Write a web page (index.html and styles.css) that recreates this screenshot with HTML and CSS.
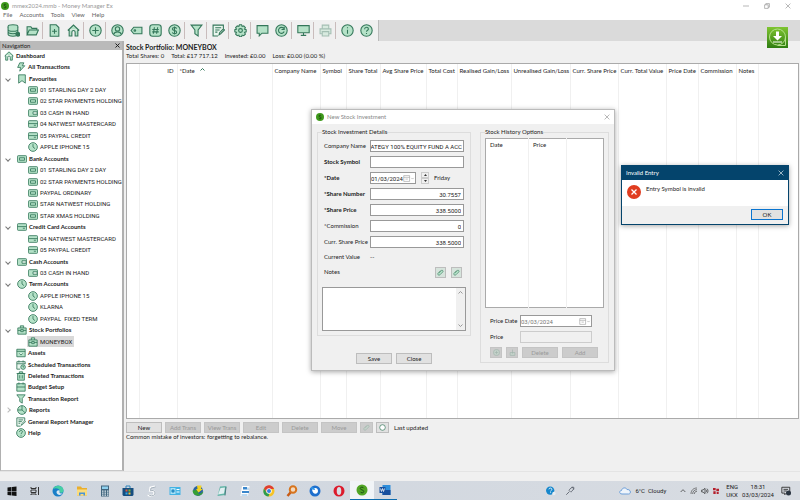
FILE: index.html
```
<!DOCTYPE html>
<html lang="en">
<head>
    <meta charset="utf-8">
    <title>mmex2024.mmb - Money Manager Ex</title>
    <link rel="stylesheet" href="styles.css">
</head>
<body>
<!-- icon set -->
<svg class="icon-set" width="0" height="0">
    <symbol id="i-db" viewBox="0 0 24 24"><ellipse cx="11" cy="5" rx="9" ry="3.5"/><path d="M2 5v14c0 2 4 3.500 9 3.500s9-1.500 9-3.500V5M2 10c0 2 4 3.500 9 3.500s9-1.500 9-3.500M2 14.500c0 2 4 3.500 9 3.500s9-1.500 9-3.500"/><circle class="solid" cx="20" cy="19" r="3.500"/></symbol>
    <symbol id="i-folder" viewBox="0 0 24 24"><path d="M2 20V5h7l2 3h9v3M2 20l4-9h17l-4 9z"/></symbol>
    <symbol id="i-newdoc" viewBox="0 0 24 24"><path d="M4 1.500h11l5 5v16H4zM12 9v9M7.500 13.500h9"/></symbol>
    <symbol id="i-home" viewBox="0 0 24 24"><path d="M1.500 12L12 2l10.500 10M4 10v12h5v-7c0-4 6-4 6 0v7h5V10"/></symbol>
    <symbol id="i-plus" viewBox="0 0 24 24"><circle cx="12" cy="12" r="10.500"/><path d="M12 6v12M6 12h12"/></symbol>
    <symbol id="i-user" viewBox="0 0 24 24"><circle cx="12" cy="12" r="10.500"/><circle cx="12" cy="9" r="4"/><path d="M5 19c2-6 12-6 14 0"/></symbol>
    <symbol id="i-tag" viewBox="0 0 24 24"><path d="M7 6h15v12H7l-5-6z"/><circle cx="9" cy="12" r="1.500"/></symbol>
    <symbol id="i-hash" viewBox="0 0 24 24"><rect x="1.500" y="1.500" width="21" height="21" rx="5"/><path d="M10 6L8 18M16 6l-2 12M6 10h12M6 14.500h12"/></symbol>
    <symbol id="i-dollar" viewBox="0 0 24 24"><circle cx="12" cy="12" r="10.500"/><path d="M16 8.500c-1-3-8-3-8 .5s8 2 8 6-7 4-8 .500M12 4.500v15" fill="none"/></symbol>
    <symbol id="i-funnel" viewBox="0 0 24 24"><path d="M2 2h20l-7 9v11l-6-4v-7z"/></symbol>
    <symbol id="i-report" viewBox="0 0 24 24"><path d="M21 9V2H2v20h9M6 7h11M6 11h8M6 15h4M13 20l1-4 7-7 2 2-7 7z" class="pale"/></symbol>
    <symbol id="i-gear" viewBox="0 0 24 24"><path d="M10 1.500h4l1 3 3-1 3 3-1.500 3 3 1v4l-3 1 1.500 3-3 3-3-1-1 3h-4l-1-3-3 1-3-3 1.500-3-3-1v-4l3-1L3 6.500l3-3 3 1z"/><circle cx="12" cy="12" r="3.500"/></symbol>
    <symbol id="i-chat" viewBox="0 0 24 24"><path d="M2 3h20v14H11l-5 5v-5H2z"/></symbol>
    <symbol id="i-refresh" viewBox="0 0 24 24"><circle cx="12" cy="12" r="10.500"/><path d="M16 8a5.500 5.500 0 1 0 1 6M17 5v5h-5" fill="none"/></symbol>
    <symbol id="i-screen" viewBox="0 0 24 24"><path d="M1.500 3h21v13h-21zM12 16v5M7 21h10"/></symbol>
    <symbol id="i-printer" viewBox="0 0 24 24"><path d="M6 9V2h12v7M6 18H2V9h20v9h-4M6 14h12v8H6z"/></symbol>
    <symbol id="i-info" viewBox="0 0 24 24"><circle cx="12" cy="12" r="10.500"/><path d="M12 10.500V18M12 6v2"/></symbol>
    <symbol id="i-help" viewBox="0 0 24 24"><circle cx="12" cy="12" r="10.500"/><path d="M8.500 9.500c0-5 7-4.500 7-.5 0 2.500-3.500 2.500-3.500 5.500M12 16.500v2" fill="none"/></symbol>
    <symbol id="i-bolt" viewBox="0 0 24 24"><path d="M9 2h10l-4 7h6L9 22l2-9H4z"/></symbol>
    <symbol id="i-mark" viewBox="0 0 24 24"><path d="M4 2h16v20l-8-6-8 6z"/></symbol>
    <symbol id="i-note" viewBox="0 0 24 24"><rect x="1" y="4" width="22" height="16" rx="2"/><path d="M6 9h12v6H6z"/></symbol>
    <symbol id="i-wallet" viewBox="0 0 24 24"><rect x="1" y="4" width="22" height="16" rx="2"/><path class="pale" d="M12 9h10v6H12z"/></symbol>
    <symbol id="i-card" viewBox="0 0 24 24"><rect x="1" y="4" width="22" height="16" rx="2"/><path d="M1 11h22M14 15h5"/></symbol>
    <symbol id="i-clock" viewBox="0 0 24 24"><circle cx="12" cy="12" r="10.500"/><path d="M12 5v7l5 4" fill="none"/></symbol>
    <symbol id="i-case" viewBox="0 0 24 24"><path d="M8 7V2h8v5M2 7h20v15H2zM2 13h7M15 13h7M9 11h6v5H9z"/></symbol>
    <symbol id="i-box" viewBox="0 0 24 24"><path d="M2 3h20v18H2zM2 8h20M8 13l4 4 4-4"/></symbol>
    <symbol id="i-sched" viewBox="0 0 24 24"><path class="pale" d="M10 22H2V4h20v6M2 9h20M7 1v5M17 1v5"/><circle cx="17" cy="17" r="5.500"/><path d="M17 14v3h2"/></symbol>
    <symbol id="i-bin" viewBox="0 0 24 24"><path d="M4 6h16v16H4zM1.500 6h21M8 6V2h8v4M9 10v8M15 10v8"/></symbol>
    <symbol id="i-cal" viewBox="0 0 24 24"><path d="M2 4h20v18H2zM2 12h20M7 1v5M17 1v5"/></symbol>
    <symbol id="i-pie" viewBox="0 0 24 24"><circle cx="12" cy="12" r="10.500"/><path d="M12 1.500V12l8 7M12 12H1.500"/></symbol>
    <symbol id="i-clip" viewBox="0 0 24 24"><path d="M7 13l8-8c3-3 8 2 5 5L10 20c-4 4-10-2-6-6L13 5"/></symbol>
    <symbol id="i-drop" viewBox="0 0 24 24"><path d="M4 22V12h16v10zM12 2v14"/></symbol>
</svg>

<header class="titlebar">
    <svg class="app-logo" viewBox="0 0 20 20"><circle cx="10" cy="10" r="10" fill="#3f9a1c"/><path d="M13 7c-1-2-6-2-6 .5s6 2 6 5-5 2.500-6 .5" fill="none" stroke="#173f0c" stroke-width="2"/></svg>
    <span>mmex2024.mmb - Money Manager Ex</span>
    <div class="window-controls">
        <button aria-label="Minimise"><svg viewBox="0 0 10 10"><path d="M0 5h10"/></svg></button>
        <button aria-label="Restore"><svg viewBox="0 0 10 10"><path d="M1 3h6v6H1zM3 3V1h6v6H7"/></svg></button>
        <button aria-label="Close"><svg viewBox="0 0 10 10"><path d="M1 1l8 8M9 1L1 9"/></svg></button>
    </div>
</header>

<nav class="menubar">
    <a href="#">File</a><a href="#">Accounts</a><a href="#">Tools</a><a href="#">View</a><a href="#">Help</a>
</nav>

<div class="toolbar">
    <div class="tools">
        <button aria-label="Database"><svg><use href="#i-db"/></svg></button>
        <button aria-label="Open"><svg><use href="#i-folder"/></svg></button>
        <i></i>
        <button aria-label="New account"><svg><use href="#i-newdoc"/></svg></button>
        <button aria-label="Home"><svg><use href="#i-home"/></svg></button>
        <i></i>
        <button aria-label="New transaction"><svg><use href="#i-plus"/></svg></button>
        <i></i>
        <button aria-label="Payees"><svg><use href="#i-user"/></svg></button>
        <button aria-label="Categories"><svg><use href="#i-tag"/></svg></button>
        <button aria-label="Tags"><svg><use href="#i-hash"/></svg></button>
        <button aria-label="Currency"><svg><use href="#i-dollar"/></svg></button>
        <i></i>
        <button aria-label="Filter"><svg><use href="#i-funnel"/></svg></button>
        <i></i>
        <button aria-label="Report manager"><svg><use href="#i-report"/></svg></button>
        <i></i>
        <button aria-label="Settings"><svg><use href="#i-gear"/></svg></button>
        <i></i>
        <button aria-label="News"><svg><use href="#i-chat"/></svg></button>
        <button aria-label="Refresh"><svg><use href="#i-refresh"/></svg></button>
        <i></i>
        <button aria-label="Full screen"><svg><use href="#i-screen"/></svg></button>
        <i></i>
        <button aria-label="Print" disabled><svg><use href="#i-printer"/></svg></button>
        <i></i>
        <button aria-label="About"><svg><use href="#i-info"/></svg></button>
        <button aria-label="Help"><svg><use href="#i-help"/></svg></button>
    </div>
</div>

<main class="workspace">
    <aside class="navigation">
        <div class="nav-title"><span>Navigation</span><button aria-label="Close navigation"><svg viewBox="0 0 10 10"><path d="M1 1l8 8M9 1L1 9"/></svg></button></div>
        <ul class="tree">
            <li class="root"><a href="#"><svg><use href="#i-home"/></svg>Dashboard</a></li>
            <li class="group"><a href="#"><svg><use href="#i-bolt"/></svg>All Transactions</a></li>
            <li class="group open"><a href="#"><svg><use href="#i-mark"/></svg>Favourites</a></li>
            <li><a href="#"><svg><use href="#i-note"/></svg>01 STARLING DAY 2 DAY</a></li>
            <li><a href="#"><svg><use href="#i-note"/></svg>02 STAR PAYMENTS HOLDING</a></li>
            <li><a href="#"><svg><use href="#i-wallet"/></svg>03 CASH IN HAND</a></li>
            <li><a href="#"><svg><use href="#i-card"/></svg>04 NATWEST MASTERCARD</a></li>
            <li><a href="#"><svg><use href="#i-card"/></svg>05 PAYPAL CREDIT</a></li>
            <li><a href="#"><svg><use href="#i-clock"/></svg>APPLE IPHONE 15</a></li>
            <li class="group open"><a href="#"><svg><use href="#i-note"/></svg>Bank Accounts</a></li>
            <li><a href="#"><svg><use href="#i-note"/></svg>01 STARLING DAY 2 DAY</a></li>
            <li><a href="#"><svg><use href="#i-note"/></svg>02 STAR PAYMENTS HOLDING</a></li>
            <li><a href="#"><svg><use href="#i-note"/></svg>PAYPAL ORDINARY</a></li>
            <li><a href="#"><svg><use href="#i-note"/></svg>STAR NATWEST HOLDING</a></li>
            <li><a href="#"><svg><use href="#i-note"/></svg>STAR XMAS HOLDING</a></li>
            <li class="group open"><a href="#"><svg><use href="#i-card"/></svg>Credit Card Accounts</a></li>
            <li><a href="#"><svg><use href="#i-card"/></svg>04 NATWEST MASTERCARD</a></li>
            <li><a href="#"><svg><use href="#i-card"/></svg>05 PAYPAL CREDIT</a></li>
            <li class="group open"><a href="#"><svg><use href="#i-wallet"/></svg>Cash Accounts</a></li>
            <li><a href="#"><svg><use href="#i-wallet"/></svg>03 CASH IN HAND</a></li>
            <li class="group open"><a href="#"><svg><use href="#i-clock"/></svg>Term Accounts</a></li>
            <li><a href="#"><svg><use href="#i-clock"/></svg>APPLE IPHONE 15</a></li>
            <li><a href="#"><svg><use href="#i-clock"/></svg>KLARNA</a></li>
            <li><a href="#"><svg><use href="#i-clock"/></svg>PAYPAL &nbsp;FIXED TERM</a></li>
            <li class="group open"><a href="#"><svg><use href="#i-case"/></svg>Stock Portfolios</a></li>
            <li><a href="#" class="selected"><svg><use href="#i-case"/></svg>MONEYBOX</a></li>
            <li class="group"><a href="#"><svg><use href="#i-box"/></svg>Assets</a></li>
            <li class="group"><a href="#"><svg><use href="#i-sched"/></svg>Scheduled Transactions</a></li>
            <li class="group"><a href="#"><svg><use href="#i-bin"/></svg>Deleted Transactions</a></li>
            <li class="group"><a href="#"><svg><use href="#i-cal"/></svg>Budget Setup</a></li>
            <li class="group"><a href="#"><svg><use href="#i-funnel"/></svg>Transaction Report</a></li>
            <li class="group closed"><a href="#"><svg><use href="#i-pie"/></svg>Reports</a></li>
            <li class="group"><a href="#"><svg><use href="#i-report"/></svg>General Report Manager</a></li>
            <li class="group"><a href="#"><svg><use href="#i-help"/></svg>Help</a></li>
        </ul>
    </aside>

    <section class="portfolio">
        <h1>Stock Portfolio: MONEYBOX</h1>
        <p class="totals"><span>Total Shares: 0</span><span>Total: £17 717.12</span><span>Invested: £0.00</span><span>Loss: £0.00 (0.00 %)</span></p>
        <div class="stock-list">
            <table>
                <colgroup>
                    <col class="w-icon"><col class="w-id"><col class="w-date"><col class="w-value"><col class="w-symbol"><col class="w-total"><col class="w-avg"><col class="w-cost"><col class="w-gain"><col class="w-loss"><col class="w-value"><col class="w-value"><col class="w-pdate"><col class="w-comm"><col class="w-notes"><col>
                </colgroup>
                <thead>
                <tr>
                    <th></th><th class="num">ID</th><th>*Date <svg class="sort" viewBox="0 0 10 6"><path d="M1 5l4-4 4 4"/></svg></th><th>Company Name</th><th>Symbol</th><th class="num">Share Total</th><th class="num">Avg Share Price</th><th class="num">Total Cost</th><th class="num">Realised Gain/Loss</th><th class="num">Unrealised Gain/Loss</th><th class="num">Curr. Share Price</th><th class="num">Curr. Total Value</th><th>Price Date</th><th class="num">Commission</th><th>Notes</th><th></th>
                </tr>
                </thead>
                <tbody>
                <tr><td></td><td></td><td></td><td></td><td></td><td></td><td></td><td></td><td></td><td></td><td></td><td></td><td></td><td></td><td></td><td></td></tr>
                </tbody>
            </table>
        </div>
        <div class="actions">
            <button>New</button>
            <button disabled>Add Trans</button>
            <button disabled>View Trans</button>
            <button disabled>Edit</button>
            <button disabled>Delete</button>
            <button disabled>Move</button>
            <button class="square" aria-label="Attachments" disabled><svg><use href="#i-clip"/></svg></button>
            <button class="square refresh" aria-label="Update prices"><svg viewBox="0 0 10 10"><circle cx="5" cy="5" r="4"/></svg></button>
            <span>Last updated</span>
        </div>
        <p class="tip">Common mistake of investors: forgetting to rebalance.</p>
    </section>
</main>
<div class="statusbar"></div>

<footer class="taskbar">
    <div class="apps">
        <a href="#" aria-label="Start"><svg viewBox="0 0 24 24"><path fill="#111" d="M3 5l8-1v8H3zM12 4l9-1v9h-9zM3 13h8v8l-8-1zM12 13h9v9l-9-1z"/></svg></a>
        <a href="#" aria-label="Task view"><svg viewBox="0 0 24 24"><path fill="none" stroke="#333" stroke-width="2" d="M4 4v3h10V4M4 10h10v5H4zM4 20v-2h10v2M19 4v16"/></svg></a>
        <a href="#" aria-label="Edge"><svg viewBox="0 0 24 24"><circle cx="12" cy="12" r="11" fill="#1a7fc8"/><path fill="#45cfa4" d="M2 8C6-2 24 0 23 12c-1 5-7 4-8 2 2-7-7-9-13-6z"/><path fill="#d9e8f2" d="M9 15c0-5 5-6 7-3-3 2 0 6 5 5-4 5-11 3-12-2z"/></svg></a>
        <a href="#" aria-label="File Explorer"><svg viewBox="0 0 24 24"><path fill="#e9ae2e" d="M2 3h8l2 3h10v15H2z"/><path fill="#fbdc7c" d="M2 9h20v12H2z"/><path fill="#4a94d6" d="M6 15h12v6h-3v-3H9v3H6z"/></svg></a>
        <a href="#" aria-label="Calculator"><svg viewBox="0 0 24 24"><path fill="#42667e" d="M4 1h16v22H4z"/><path fill="#8fd0ee" d="M6 3h12v5H6z"/><path stroke="#dce8ee" stroke-width="2.500" stroke-dasharray="3 2" d="M6 12h13M6 16h13M6 20h13"/></svg></a>
        <a href="#" aria-label="Store"><svg viewBox="0 0 24 24"><path fill="#164e80" d="M1 6h22v14l-2 2H3l-2-2z"/><path fill="none" stroke="#2b83bb" stroke-width="2" d="M8 6V2h8v4"/><path fill="#e35a38" d="M7 9h4v4H7z"/><path fill="#7cb82f" d="M13 9h4v4h-4z"/><path fill="#30a6e2" d="M7 15h4v4H7z"/><path fill="#f4c033" d="M13 15h4v4h-4z"/></svg></a>
        <a href="#" aria-label="Scanner"><svg viewBox="0 0 24 24"><path fill="none" stroke="#fff" stroke-width="4" d="M18 3L9 5l-1 6c8-1 10 3 8 8-3 4-9 3-12 0"/><path fill="none" stroke="#8796a4" stroke-width="1.500" d="M19 4L10 6l-1 5c8-1 10 3 8 8-3 4-9 3-12 0"/></svg></a>
        <a href="#" aria-label="Control Panel"><svg viewBox="0 0 24 24"><path fill="#43b3e4" d="M1 4h22v16H1z"/><path fill="#a9e1f6" d="M3 6h10v12H3z"/><path stroke="#fff" stroke-width="2" d="M15 9h6M15 14h6"/><circle cx="8" cy="12" r="3.500" fill="#288cc4"/></svg></a>
        <a href="#" aria-label="Download Manager"><svg viewBox="0 0 24 24"><circle cx="12" cy="12" r="10" fill="#2b64a0"/><path fill="#37a033" d="M1 11l9-1 4 9 9-6c-2 10-20 13-22-2z"/><path fill="#f2d222" d="M10 1h9l-1 7h4l-9 7-5-7h3z"/></svg></a>
        <a href="#" aria-label="Notepad"><svg viewBox="0 0 24 24"><path fill="#62b5a6" d="M8 3l13-1-3 18-15 2z"/><path fill="#e1eff1" d="M9 6l9-1-2 12-12 2z"/><path fill="none" stroke="#4b7c80" stroke-width="2" d="M20 4l-2 17"/></svg></a>
        <a href="#" aria-label="Documents"><svg viewBox="0 0 24 24"><path fill="#fff" d="M6 2h15l-3 20H3z"/><path fill="#3a86cb" d="M8 4h8v5H8zM6 12h14v4H6z"/><path stroke="#7ab2df" stroke-width="2" d="M5 20h12M18 5v5"/></svg></a>
        <a href="#" aria-label="Chrome"><svg viewBox="0 0 24 24"><circle cx="12" cy="12" r="11" fill="#f6c324"/><path fill="#df3e31" d="M2 7C7-2 19-1 22 8H12l-4 7z"/><path fill="#2e9c4c" d="M2 7l6 9 5 1-2 6C1 22-1 13 2 7z"/><circle cx="12" cy="12" r="5.500" fill="#fff"/><circle cx="12" cy="12" r="4" fill="#397fe0"/></svg></a>
        <a href="#" aria-label="Search tool"><svg viewBox="0 0 24 24"><circle cx="14" cy="9" r="6.500" fill="#f3dac0" stroke="#d7741d" stroke-width="4"/><path stroke="#c85c17" stroke-width="5" d="M9 15l-6 7"/></svg></a>
        <a href="#" aria-label="Thunderbird"><svg viewBox="0 0 24 24"><circle cx="12" cy="12" r="11" fill="#1e6fcd"/><path fill="#fff" d="M6 9c5-5 12-4 12 3s-11 8-12-3z"/><path fill="#2c94e8" d="M4 4c6 0 8 3 8 6-5 0-9-2-8-6z"/></svg></a>
        <a href="#" aria-label="Opera"><svg viewBox="0 0 24 24"><circle cx="12" cy="12" r="11" fill="#dc1b2c"/><ellipse cx="12" cy="12" rx="4.500" ry="8" fill="#d7dce3"/></svg></a>
        <a href="#" class="active" aria-label="Money Manager Ex"><svg viewBox="0 0 24 24"><circle cx="12" cy="12" r="11" fill="#51a526"/><path d="M15.500 8.500c-1-3-7-3-7 .5s7 2 7 6-6 3-7 .5" fill="none" stroke="#1c5314" stroke-width="2"/></svg></a>
        <a href="#" class="running" aria-label="Word"><svg viewBox="0 0 24 24"><path fill="#2d8ddb" d="M7 2h16v20H7z"/><path fill="#174f9e" d="M7 12h16v10H7zM1 6h12v12H1z"/><path fill="none" stroke="#fff" stroke-width="1.500" d="M3 9l2 6 2-6 2 6 2-6"/></svg></a>
    </div>
    <div class="tray">
        <svg class="tray-help" viewBox="0 0 24 24"><circle cx="10" cy="11" r="10" fill="#1687cc"/><path d="M7 8c0-4 7-4 7 0 0 3-3 3-3 5M11 15v2" fill="none" stroke="#fff" stroke-width="2"/><circle cx="19" cy="18" r="4" fill="#e8edf2"/></svg>
        <svg class="tray-pen" viewBox="0 0 24 24"><path d="M3 21l7-7M9 10l5 5M10 9l7-6 4 4-6 7M16 3h5v5" fill="none" stroke="#555c66" stroke-width="2"/></svg>
        <svg class="cloud" viewBox="0 0 26 18"><path d="M6 16C0 16 0 9 5 9c1-6 9-7 11-2 8-1 9 9 3 9z" fill="#eef4fb" stroke="#6ea0da" stroke-width="2"/></svg>
        <span class="weather">6°C &nbsp;Cloudy</span>
        <svg viewBox="0 0 24 24"><path d="M5 15l7-7 7 7" fill="none" stroke="#222" stroke-width="2"/></svg>
        <svg viewBox="0 0 24 24"><path d="M3 21C3 10 10 3 21 3M8 21c0-8 5-13 13-13M13 21c0-5 3-8 8-8" fill="none" stroke="#444" stroke-width="2"/></svg>
        <svg viewBox="0 0 24 24"><path d="M2 9h4l6-5v16l-6-5H2zM15 8c2 2 2 6 0 8M18 5c4 4 4 10 0 14" fill="none" stroke="#222" stroke-width="2"/></svg>
        <svg viewBox="0 0 24 24"><path d="M3 3h8v7H3zM13 5h8v8h-8zM4 13h7v8H4zM14 15h6v6h-6z" fill="#b41f2c"/></svg>
        <div class="lang">ENG<br>UKX</div>
        <div class="clock">18:31<br>03/03/2024</div>
        <svg class="notify" viewBox="0 0 24 24"><path d="M2 3h19v14h-8l-4 4v-4H2zM6 8h11M6 12h8" fill="none" stroke="#222" stroke-width="2"/><circle cx="18" cy="17" r="6" fill="#2a3440"/></svg>
    </div>
</footer>

<button class="download" aria-label="Download">
    <svg viewBox="0 0 42 42"><circle cx="21" cy="20" r="16" fill="none" stroke="#b3e08a" stroke-width="2"/><path d="M37 20v17H21" fill="none" stroke="#b3e08a" stroke-width="2"/><path d="M18 9h6v9h6l-9 9-9-9h6zM12 29h18v2H12z" fill="#fff"/></svg>
</button>

<form class="dialog investment" onsubmit="return false">
    <div class="dialog-title">
        <svg class="app-logo" viewBox="0 0 20 20"><circle cx="10" cy="10" r="10" fill="#3f9a1c"/><path d="M13 7c-1-2-6-2-6 .5s6 2 6 5-5 2.500-6 .5" fill="none" stroke="#173f0c" stroke-width="2"/></svg>
        <span>New Stock Investment</span>
        <button type="button" aria-label="Close dialog"><svg viewBox="0 0 10 10"><path d="M1 1l8 8M9 1L1 9"/></svg></button>
    </div>
    <div class="dialog-body">
        <div class="details-column">
            <fieldset class="details">
                <legend>Stock Investment Details</legend>
                <div class="field"><label for="company">Company Name</label><input type="text" id="company" class="overflowing" value="RATEGY 100% EQUITY FUND A ACC"></div>
                <div class="field required"><label for="symbol">Stock Symbol</label><input type="text" id="symbol"></div>
                <div class="field required"><label for="date">*Date</label>
                    <div class="date-box"><input type="text" id="date" value="01/03/2024"><svg viewBox="0 0 20 12"><path d="M1 1h10v10H1zM1 4h10M4 7h4M14 5l2 2 2-2"/></svg></div>
                    <div class="spinner"><button type="button" aria-label="Next day"><svg viewBox="0 0 6 4"><path d="M0 4l3-4 3 4z"/></svg></button><button type="button" aria-label="Previous day"><svg viewBox="0 0 6 4"><path d="M0 0l3 4 3-4z"/></svg></button></div>
                    <span>Friday</span>
                </div>
                <div class="field required"><label for="shares">*Share Number</label><input type="text" id="shares" class="num" value="30.7557"></div>
                <div class="field required"><label for="price">*Share Price</label><input type="text" id="price" class="num" value="338.5000"></div>
                <div class="field"><label for="commission">*Commission</label><input type="text" id="commission" class="num" value="0"></div>
                <div class="field"><label for="current">Curr. Share Price</label><input type="text" id="current" class="num" value="338.5000"></div>
                <div class="field value-row"><span class="caption">Current Value</span><span>--</span></div>
                <div class="field"><label for="notes">Notes</label>
                    <div class="note-tools"><button type="button" class="square" aria-label="Attachments"><svg><use href="#i-clip"/></svg></button><button type="button" class="square" aria-label="Link"><svg><use href="#i-clip"/></svg></button></div>
                </div>
                <div class="notes-box">
                    <textarea id="notes"></textarea>
                    <div class="scroll"><svg viewBox="0 0 10 6"><path d="M1 5l4-4 4 4"/></svg><svg viewBox="0 0 10 6"><path d="M1 1l4 4 4-4"/></svg></div>
                </div>
            </fieldset>
            <div class="dialog-buttons"><button type="submit">Save</button><button type="button">Close</button></div>
        </div>
        <fieldset class="history">
            <legend>Stock History Options</legend>
            <table>
                <colgroup><col class="w-hdate"><col class="w-hprice"><col></colgroup>
                <thead><tr><th>Date</th><th>Price</th><th></th></tr></thead>
                <tbody><tr><td></td><td></td><td></td></tr></tbody>
            </table>
            <div class="field"><label for="hdate">Price Date</label><div class="date-box"><input type="text" id="hdate" value="03/03/2024"><svg viewBox="0 0 20 12"><path d="M1 1h10v10H1zM1 4h10M4 7h4M14 5l2 2 2-2"/></svg></div></div>
            <div class="field"><label for="hprice">Price</label><input type="text" id="hprice" disabled></div>
            <div class="history-buttons">
                <button type="button" class="square" aria-label="Import" disabled><svg><use href="#i-plus"/></svg></button>
                <button type="button" class="square" aria-label="Download prices" disabled><svg><use href="#i-drop"/></svg></button>
                <button type="button" disabled>Delete</button>
                <button type="button" disabled>Add</button>
            </div>
        </fieldset>
    </div>
</form>

<div class="dialog message" role="alertdialog" aria-label="Invalid Entry">
    <div class="message-title"><span>Invalid Entry</span><button aria-label="Close message"><svg viewBox="0 0 10 10"><path d="M1 1l8 8M9 1L1 9"/></svg></button></div>
    <div class="message-body">
        <svg viewBox="0 0 28 28"><circle cx="14" cy="14" r="14" fill="#e03c1f"/><path d="M9 9l10 10M19 9L9 19" stroke="#fff" stroke-width="2.500"/></svg>
        <p>Entry Symbol is invalid</p>
    </div>
    <div class="message-footer"><button>OK</button></div>
</div>
</body>
</html>
```
FILE: styles.css
```
* {
    box-sizing: border-box;
}

body {
    margin: 0;
    height: 100vh;
    display: flex;
    flex-direction: column;
    position: relative;
    overflow: hidden;
    background: #f0f0f0;
    color: #222;
    font-family: Lato, "Open Sans", sans-serif;
    font-size: 6px;
    line-height: 8px;
}

button, input, textarea {
    font: inherit;
    color: inherit;
    padding: 0;
    margin: 0;
}

/* narrower capitals and digits */
input, .tree li, .tray {
    font-family: Roboto, "Liberation Sans", sans-serif;
}

button {
    border: 1px solid #bdbdbd;
    background: #e1e1e1;
}

button:disabled {
    background: #ccc;
    border-color: #c4c4c4;
    color: #999;
}

a {
    color: inherit;
    text-decoration: none;
}

p, h1, ul {
    margin: 0;
    padding: 0;
}

svg {
    display: block;
    flex: none;
    fill: #b5e2c8;
    stroke: #34775a;
    stroke-width: 2;
}

svg .solid {
    fill: #34775a;
}

svg .pale {
    fill: #e9f6ee;
}

footer svg, .message-body svg, .download svg, .app-logo {
    stroke: none;
}

.icon-set {
    position: absolute;
}

/* window frame */
.titlebar {
    flex: none;
    display: flex;
    align-items: center;
    gap: 3px;
    height: 11px;
    padding-left: 1px;
    background: #fff;
    color: #999;
}

.app-logo {
    width: 8px;
    height: 8px;
}

.window-controls {
    display: flex;
    gap: 15px;
    margin-left: auto;
    padding-right: 9px;
}

.window-controls button, .dialog-title button, .nav-title button, .message-title button {
    border: 0;
    background: none;
}

.window-controls svg, .dialog-title button svg, .nav-title button svg, .message-title button svg {
    width: 6px;
    height: 6px;
    fill: none;
    stroke: #888;
    stroke-width: 1;
}

.menubar {
    flex: none;
    display: flex;
    gap: 7px;
    height: 9px;
    padding-left: 3px;
    background: #fff;
    color: #666;
}

.toolbar {
    flex: none;
    height: 21px;
    background: #dadada;
}

.tools {
    display: flex;
    align-items: center;
    width: max-content;
    height: 21px;
    padding: 0 2px 0 4px;
    background: #f0f0f0;
    border-right: 1px solid #bbb;
}

.tools button {
    display: flex;
    justify-content: center;
    width: 19px;
    border: 0;
    background: none;
}

.tools svg {
    width: 13px;
    height: 13px;
}

.tools button:disabled {
    opacity: 0.4;
}

.tools i {
    width: 3px;
    height: 17px;
    border-left: 1px solid #c9bcbc;
}

.download {
    position: absolute;
    top: 27px;
    right: 12px;
    width: 21px;
    height: 21px;
    border: 0;
    background: linear-gradient(#7fc531, #2f7d12);
}

.download svg {
    width: 21px;
    height: 21px;
}

.workspace {
    flex: 1;
    min-height: 0;
    display: flex;
}

/* navigation tree */
.navigation {
    width: 124px;
    flex: none;
    display: flex;
    flex-direction: column;
    background: #fff;
    border-right: 2px solid #b0b0b0;
    border-left: 1px solid #b0b0b0;
    border-bottom: 1px solid #c8c8c8;
}

.nav-title {
    flex: none;
    display: flex;
    justify-content: space-between;
    align-items: center;
    height: 9px;
    padding: 0 2px 0 1px;
    background: #bababa;
}

.nav-title button svg {
    width: 5px;
    height: 5px;
    stroke: #222;
    stroke-width: 2;
}

.tree {
    flex: 1;
    display: flex;
    flex-direction: column;
    padding-bottom: 31px;
    list-style: none;
}

.tree li {
    flex: 1;
    min-height: 0;
    display: flex;
    align-items: center;
    padding-left: 26px;
    white-space: nowrap;
}

.tree .root, .tree .group {
    font-family: inherit;
    font-weight: bold;
}

.tree .root {
    padding-left: 2px;
}

.tree .group {
    padding-left: 14px;
}

.tree .open, .tree .closed {
    padding-left: 5px;
}

.tree .open::before, .tree .closed::before {
    content: "";
    width: 3px;
    height: 3px;
    margin-right: 6px;
    border: solid #777;
    border-width: 0 1px 1px 0;
    transform: rotate(45deg);
}

.tree .closed::before {
    border-color: #bbb;
    transform: rotate(-45deg);
}

.tree a {
    display: flex;
    align-items: center;
    gap: 2px;
    height: 11px;
    padding: 0 2px 0 1px;
}

.tree svg {
    width: 10px;
    height: 10px;
}

.tree .selected {
    background: #d9d9d9;
}

/* portfolio */
.portfolio {
    flex: 1;
    min-width: 0;
    display: flex;
    flex-direction: column;
    padding: 1px 1px 0 2px;
}

.portfolio h1 {
    padding-top: 1px;
    font-size: 7px;
    line-height: 8px;
}

.totals {
    display: flex;
    gap: 7px;
    height: 12px;
    line-height: 10px;
}

.stock-list {
    flex: 1;
    background: #fff;
    border: 1px solid #aaa;
}

table {
    width: 100%;
    height: 100%;
    table-layout: fixed;
    border-collapse: collapse;
}

th, td {
    padding: 0 3px 0 2px;
    border-right: 1px solid #f0f0f0;
}

th:last-child, td:last-child {
    border-right: 0;
}

th {
    height: 13px;
    font-weight: normal;
    text-align: left;
    white-space: nowrap;
}

th.num, input.num {
    text-align: right;
}

.sort {
    display: inline-block;
    width: 5px;
    height: 3px;
    margin: 0 0 2px 4px;
    fill: none;
}

.w-icon { width: 12px; }
.w-id { width: 38px; }
.w-date { width: 95px; }
.w-value { width: 48px; }
.w-symbol { width: 26px; }
.w-total { width: 34px; }
.w-avg { width: 46px; }
.w-cost { width: 31px; }
.w-gain { width: 54px; }
.w-loss { width: 59px; }
.w-pdate { width: 32px; }
.w-comm { width: 38px; }
.w-notes { width: 22px; }

.actions {
    display: flex;
    align-items: center;
    gap: 3px;
    padding-top: 3px;
}

.actions button {
    width: 36px;
    height: 11px;
    line-height: 8px;
}

.actions .square {
    width: 13px;
}

.actions .refresh {
    margin-right: 2px;
}

.refresh svg {
    fill: #fff;
    stroke-width: 1;
}

.square {
    display: flex;
    align-items: center;
    justify-content: center;
}

.square svg {
    width: 7px;
    height: 7px;
}

.square:disabled svg {
    opacity: 0.3;
}

.tip {
    height: 38px;
}

.statusbar {
    flex: none;
    height: 10px;
    border-top: 1px solid #e4e4e4;
}

/* dialogs */
.dialog {
    position: absolute;
    background: #f0f0f0;
    border: 1px solid #bbb;
    box-shadow: 0 1px 5px rgba(0, 0, 0, 0.35);
}

.investment {
    left: 311px;
    top: 109px;
    width: 304px;
}

.dialog-title {
    display: flex;
    align-items: center;
    gap: 3px;
    height: 14px;
    padding: 0 4px;
    background: #fff;
    color: #888;
}

.dialog-title button {
    margin-left: auto;
}

.dialog-body {
    display: flex;
    gap: 9px;
    padding: 4px 5px 2px;
}

.details-column {
    flex: 1;
}

fieldset {
    min-width: 0;
    margin: 0;
    padding: 2px 4px 4px;
    border: 1px solid #ddd;
}

legend {
    padding: 0;
    font-size: 6px;
}

.field {
    display: flex;
    align-items: center;
    height: 16px;
    padding: 0 2px;
    white-space: nowrap;
}

.field label, .field .caption {
    width: 46px;
    flex: none;
}

.required label {
    font-weight: bold;
}

.field input {
    flex: 1;
    min-width: 0;
    height: 12px;
    padding: 0 2px;
    border: 1px solid #999;
    background: #fff;
}

.field input:disabled {
    background: #f0f0f0;
    border-color: #ccc;
}

/* keeps the end of a long name in view */
.field .overflowing {
    direction: rtl;
    padding: 0 1px 0 0;
}

.field .date-box {
    display: flex;
    align-items: center;
    width: 46px;
    height: 12px;
    border: 1px solid #999;
    background: #fff;
}

.field .date-box input {
    height: 10px;
    padding: 0;
    border: 0;
}

.date-box svg {
    width: 12px;
    height: 7px;
    fill: none;
    stroke: #999;
    stroke-width: 1;
}

.spinner {
    display: flex;
    flex-direction: column;
    margin: 0 5px;
}

.spinner button {
    display: flex;
    align-items: center;
    justify-content: center;
    width: 8px;
    height: 6px;
    border-color: #ccc;
    background: #f0f0f0;
}

.spinner svg {
    width: 3px;
    height: 2px;
    fill: #333;
    stroke: none;
}

.value-row {
    height: 14px;
}

.note-tools {
    display: flex;
    gap: 5px;
    margin-left: auto;
    padding-right: 2px;
}

.note-tools button {
    width: 11px;
    height: 11px;
    background: #d6e4dc;
}

.notes-box {
    display: flex;
    height: 44px;
    margin-top: 7px;
    border: 1px solid #999;
    background: #fff;
}

.notes-box textarea {
    flex: 1;
    border: 0;
    resize: none;
}

.scroll {
    display: flex;
    flex-direction: column;
    justify-content: space-between;
    width: 9px;
    padding: 3px 2px;
    background: #f0f0f0;
}

.scroll svg {
    width: 5px;
    height: 3px;
    fill: none;
    stroke: #999;
}

.dialog-buttons {
    display: flex;
    justify-content: center;
    gap: 4px;
    padding: 17px 0 4px;
}

.dialog-buttons button, .history-buttons button {
    width: 36px;
    height: 11px;
    line-height: 8px;
}

.history {
    width: 129px;
    display: flex;
    flex-direction: column;
    margin-bottom: 5px;
    padding: 2px 4px 4px;
}

.history table {
    height: 170px;
    margin-bottom: 5px;
    background: #fff;
    border: 1px solid #aaa;
}

.history th {
    padding-left: 4px;
}

.w-hdate { width: 43px; }
.w-hprice { width: 38px; }

.history .field {
    padding: 0 12px 0 5px;
}

.history .field label {
    width: 30px;
}

.history .date-box {
    flex: 1;
    color: #777;
}

.history-buttons {
    display: flex;
    gap: 4px;
    padding: 2px 5px 0;
}

.history-buttons .square {
    width: 12px;
}

/* error message */
.message {
    left: 621px;
    top: 165px;
    width: 168px;
    border-color: #04446c;
}

.message-title {
    display: flex;
    align-items: center;
    justify-content: space-between;
    height: 14px;
    padding: 0 4px;
    background: #04446c;
    color: #fff;
}

.message-title button svg {
    stroke: #fff;
}

.message-body {
    display: flex;
    gap: 5px;
    height: 26px;
    padding: 5px;
    background: #fff;
}

.message-body svg {
    width: 14px;
    height: 14px;
}

.message-footer {
    display: flex;
    justify-content: flex-end;
    padding: 3px 5px 4px;
}

.message-footer button {
    width: 32px;
    height: 11px;
    border: 1px solid #0a74cf;
    line-height: 8px;
}

/* taskbar */
.taskbar {
    flex: none;
    display: flex;
    justify-content: space-between;
    height: 19px;
    background: linear-gradient(90deg, #ced5de, #d8dce2);
}

.apps {
    display: grid;
    grid-template-columns: repeat(17, 1fr);
    width: 397px;
}

.apps a {
    display: flex;
    align-items: center;
    justify-content: center;
}

.apps svg {
    width: 12px;
    height: 12px;
}

.apps .active {
    background: #f1f4f7;
    border-bottom: 1px solid #0d6cae;
}

.apps .running {
    border-bottom: 1px solid #0d6cae;
}

.tray {
    display: flex;
    align-items: center;
    gap: 3px;
    padding-right: 9px;
}

.tray svg {
    width: 8px;
    height: 8px;
}

.tray .tray-help, .tray .tray-pen, .tray .notify {
    width: 10px;
    height: 10px;
}

.tray .tray-pen {
    margin: 0 41px 0 6px;
}

.tray .cloud {
    width: 13px;
    height: 9px;
}

.tray .weather {
    margin-right: 10px;
}

.lang {
    margin-left: 3px;
}

.clock {
    margin: 0 4px 0 1px;
    text-align: center;
}
```
